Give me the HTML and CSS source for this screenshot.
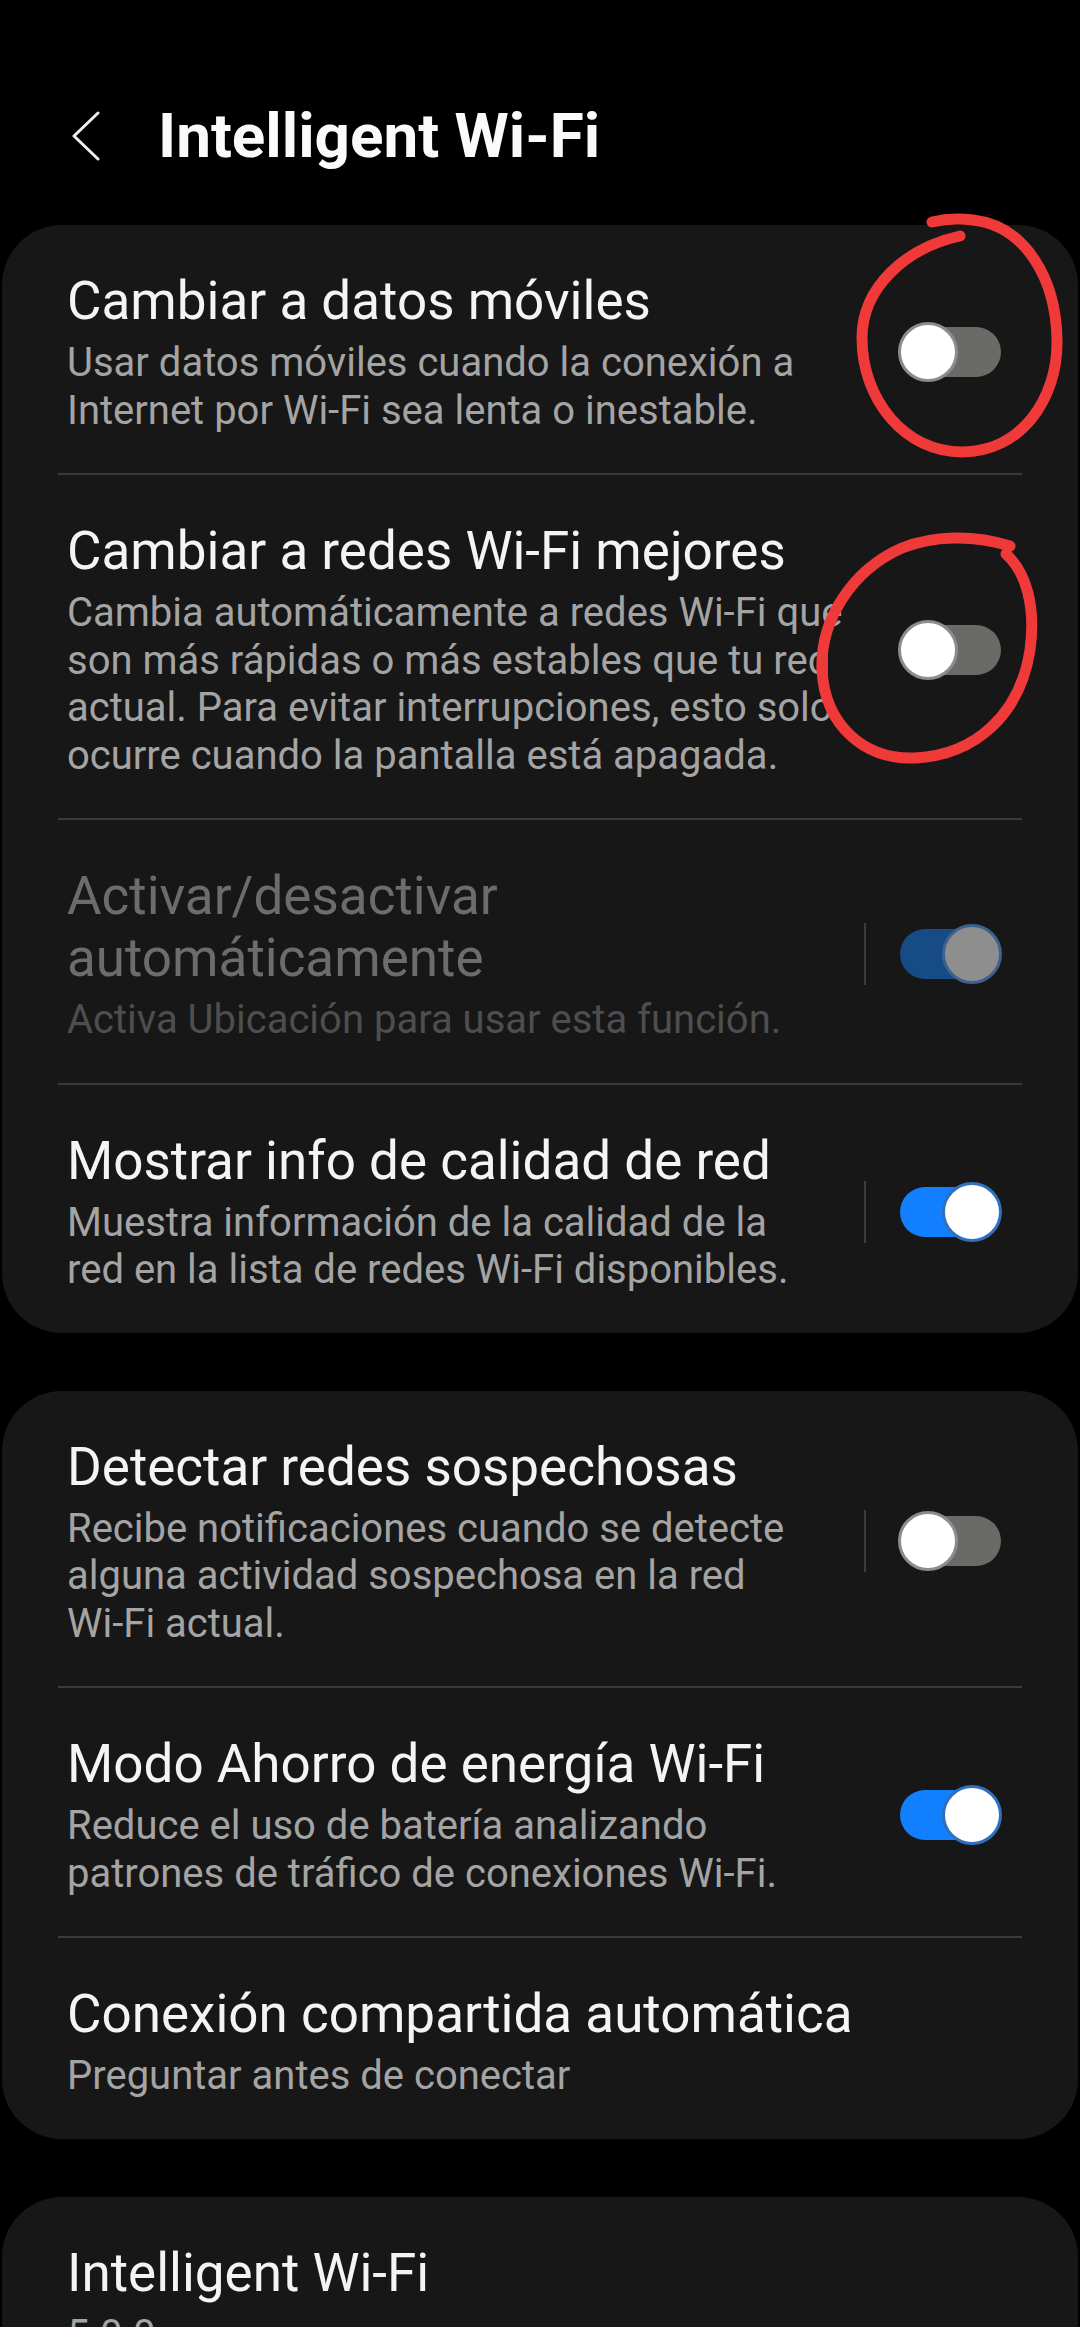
FILE: index.html
```html
<!DOCTYPE html>
<html lang="es">
<head>
    <meta charset="UTF-8">
    <meta name="viewport" content="width=device-width, initial-scale=1.0">
    <title>Intelligent Wi-Fi</title>
    <link rel="stylesheet" href="styles.css">
</head>
<body>
<div class="page">
    <div class="header">
        <svg class="back" viewBox="0 0 30 50" fill="none" stroke="#eeeeee" stroke-width="3" stroke-linecap="round" stroke-linejoin="round">
            <polyline points="27,2 3,25 27,48"/>
        </svg>
        <h1>Intelligent Wi-Fi</h1>
    </div>

    <div class="card">
        <div class="row">
            <div class="text">
                <div class="title">Cambiar a datos móviles</div>
                <div class="sub">Usar datos móviles cuando la conexión a Internet por <span class="nw">Wi-Fi</span> sea lenta o inestable.</div>
            </div>
            <div class="switch plain"><span class="thumb"></span></div>
        </div>
        <div class="row">
            <div class="text">
                <div class="title">Cambiar a redes Wi-Fi mejores</div>
                <div class="sub">Cambia automáticamente a redes <span class="nw">Wi-Fi</span> que son más rápidas o más estables que tu red actual. Para evitar interrupciones, esto solo ocurre cuando la pantalla está apagada.</div>
            </div>
            <div class="switch plain"><span class="thumb"></span></div>
        </div>
        <div class="row disabled">
            <div class="text">
                <div class="title">Activar/desactivar automáticamente</div>
                <div class="sub">Activa Ubicación para usar esta función.</div>
            </div>
            <div class="vline"></div>
            <div class="switch on"><span class="thumb"></span></div>
        </div>
        <div class="row">
            <div class="text">
                <div class="title">Mostrar info de calidad de red</div>
                <div class="sub">Muestra información de la calidad de la red en la lista de redes <span class="nw">Wi-Fi</span> disponibles.</div>
            </div>
            <div class="vline"></div>
            <div class="switch on"><span class="thumb"></span></div>
        </div>
    </div>

    <div class="card">
        <div class="row">
            <div class="text">
                <div class="title">Detectar redes sospechosas</div>
                <div class="sub">Recibe notificaciones cuando se detecte alguna actividad sospechosa en la red <span class="nw">Wi-Fi</span> actual.</div>
            </div>
            <div class="vline"></div>
            <div class="switch"><span class="thumb"></span></div>
        </div>
        <div class="row">
            <div class="text">
                <div class="title">Modo Ahorro de energía Wi-Fi</div>
                <div class="sub">Reduce el uso de batería analizando patrones de tráfico de conexiones <span class="nw">Wi-Fi</span>.</div>
            </div>
            <div class="switch plain on"><span class="thumb"></span></div>
        </div>
        <div class="row">
            <div class="text">
                <div class="title">Conexión compartida automática</div>
                <div class="sub">Preguntar antes de conectar</div>
            </div>
        </div>
    </div>

    <div class="card">
        <div class="row">
            <div class="text">
                <div class="title">Intelligent Wi-Fi</div>
                <div class="sub">5.0.0</div>
            </div>
        </div>
    </div>

    <!-- hand-drawn marks over the two toggles -->
    <svg class="marks" viewBox="0 0 1080 2327" fill="none" stroke="#f03a3a" stroke-width="11" stroke-linecap="round">
        <path d="M960 236 C905 248 862 288 862 338 C862 400 905 452 962 452 C1020 452 1058 400 1057 340 C1056 278 1025 226 973 220 C958 218 944 219 932 222"/>
        <path d="M1010 546 C972 534 932 536 902 548 C852 570 820 620 822 670 C825 726 865 760 915 758 C975 755 1020 715 1030 650 C1036 606 1026 572 1006 554"/>
    </svg>
</div>
</body>
</html>
```

FILE: styles.css
```css
body {
    margin: 0;
    background-color: #000;
    font-family: Roboto, "Noto Sans", sans-serif;
    color: #f4f4f4;
}

.page {
    position: relative;
    overflow: hidden;
}

.header {
    display: flex;
    align-items: center;
    height: 80px;
    padding: 96px 0 49px 71px;
}

.back {
    width: 30px;
    height: 50px;
    margin-right: 57px;
}

.header h1 {
    margin: 0;
    font-size: 62px;
    font-weight: 700;
    line-height: 80px;
    color: #fafafa;
}

.card {
    background-color: #171717;
    border-radius: 60px;
    margin: 0 2px 58px;
}

.row {
    display: flex;
    align-items: center;
    margin: 0 56px;
    padding: 45px 21px 39px 9px;
}

.row + .row {
    border-top: 2px solid #393939;
}

.text {
    flex: 1;
    min-width: 0;
}

.title {
    font-size: 53px;
    line-height: 62px;
    color: #f4f4f4;
}

.sub {
    margin-top: 7px;
    font-size: 40px;
    line-height: 47.5px;
    color: #a4a4a4;
}

.nw {
    white-space: nowrap;
}

.disabled .title {
    color: #6c6c6c;
}

.disabled .sub {
    color: #4e4e4e;
}

/* vertical separator before a toggle */
.vline {
    width: 2px;
    height: 62px;
    background-color: #3c3c3c;
    margin: 0 34px 0 56px;
    flex-shrink: 0;
}

.switch {
    display: flex;
    align-items: center;
    width: 101px;
    height: 50px;
    border-radius: 25px;
    background-color: #6a6a66;
    flex-shrink: 0;
}

.switch.plain {
    margin-left: 36px;
}

.thumb {
    flex: none;
    width: 54px;
    height: 54px;
    margin-left: -2px;
    border: 3px solid #8c8c8c;
    border-radius: 50%;
    background-color: #fff;
}

.switch.on {
    justify-content: flex-end;
    background-color: #127fff;
}

.switch.on .thumb {
    margin-left: 0;
    margin-right: -1px;
    border-color: #2f6fbd;
}

.disabled .switch.on {
    background-color: #174b86;
}

.disabled .switch.on .thumb {
    background-color: #8e8e8e;
    border-color: #3e628e;
}

.marks {
    position: absolute;
    top: 0;
    left: 0;
    width: 1080px;
    height: 2327px;
    pointer-events: none;
}
```
